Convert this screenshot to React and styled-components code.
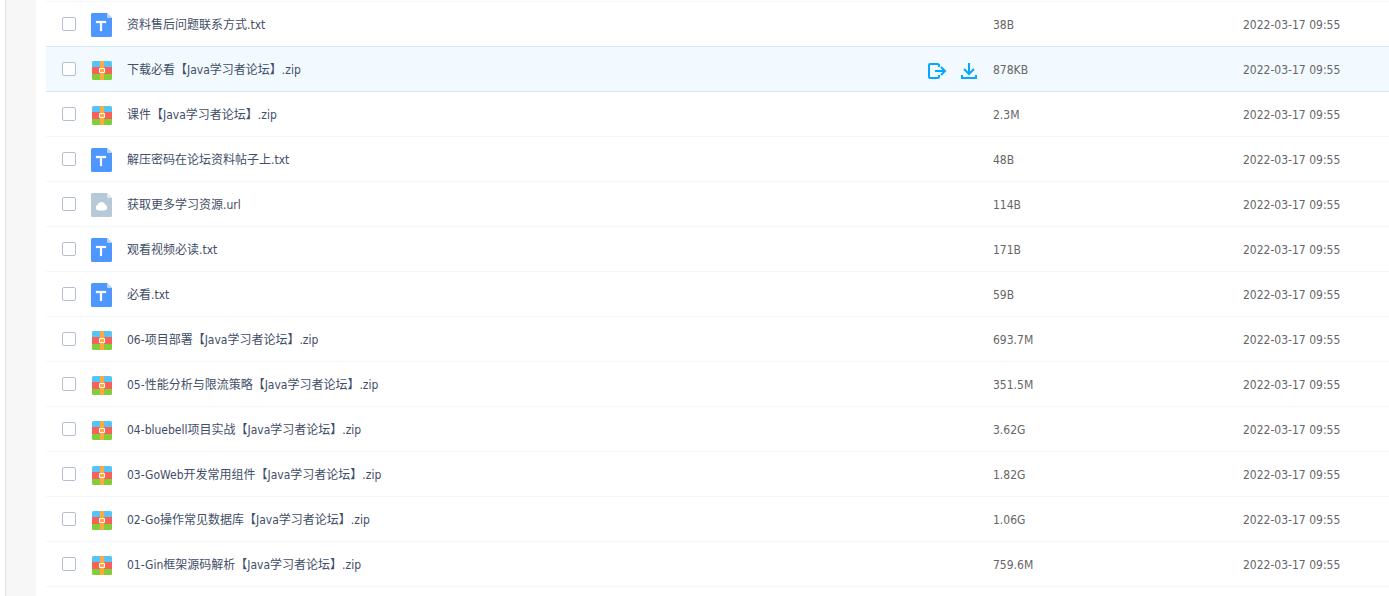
import React, { useState } from 'react';
import styled, { createGlobalStyle } from 'styled-components';

const GlobalStyle = createGlobalStyle`
	* {
		box-sizing: border-box;
	}

	body {
		margin: 0;
		background: #fff;
		color: #666;
		font-family: 'DejaVu Sans Condensed', 'Noto Sans CJK SC', sans-serif;
		font-size: 12px;
		line-height: 18px;
	}
`;

const Page = styled.div`
	display: flex;
	min-height: 100vh;
	padding-left: 5px;
`;

const Gutter = styled.aside`
	flex: none;
	width: 31px;
	background: #f7f7f7;
	border-left: 1px solid #e2e2e2;
`;

const Main = styled.main`
	flex: 1;
	min-width: 0;
	padding: 1px 0 0 10px;
`;

const Table = styled.table`
	width: 100%;
	table-layout: fixed;
	border-spacing: 0;
	border-bottom: 1px solid #f2f6fd;
`;

const Col = styled.col`
	width: ${props => props.$width}px;
`;

const Cell = styled.td`
	height: 45px;
	padding: 2px 0 0;
	border-top: 1px solid #f2f6fd;
	white-space: nowrap;
`;

const Row = styled.tr`
	&[data-active='true'] ${Cell} {
		background: #f2faff;
	}

	&[data-active='true'] ${Cell}, &[data-active='true'] + & ${Cell} {
		border-top-color: #d4e8fb;
	}
`;

const NameBox = styled.div`
	display: flex;
	align-items: center;
	padding: 0 13px 0 16px;
`;

const Checkbox = styled.input`
	appearance: none;
	flex: none;
	width: 14px;
	height: 14px;
	margin: 0 15px 2px 0;
	border: 1px solid #b4c0d2;
	border-radius: 2px;
	background: #fff;

	&:checked {
		background: #06a7ff;
		border-color: #06a7ff;
	}
`;

const FileIcon = styled.svg`
	flex: none;
	width: 22px;
	height: 24px;
	margin-right: 14px;
`;

const FileLink = styled.a`
	flex: 1;
	color: #424e67;
	text-decoration: none;
	overflow: hidden;
	text-overflow: ellipsis;
`;

const Actions = styled.div`
	display: flex;
	gap: 13px;
	padding-top: 4px;
`;

const ActionButton = styled.button`
	width: 20px;
	height: 20px;
	padding: 0;
	border: 0;
	background: none;
	color: #06a7ff;
	cursor: pointer;

	svg {
		display: block;
	}
`;

const TextIcon = () => (
	<FileIcon viewBox="0 0 22 24" aria-hidden="true">
		<path d="M1.5 0H16l5 5v17.5a1.5 1.5 0 0 1-1.5 1.5h-18A1.5 1.5 0 0 1 0 22.5v-21A1.5 1.5 0 0 1 1.5 0Z" fill="#4d97ff" />
		<path d="M16 0l5 5h-4a1 1 0 0 1-1-1Z" fill="#b8d5ff" />
		<path d="M5 8h10v2h-4v8H9v-8H5Z" fill="#fff" stroke="#fff" strokeWidth=".2" />
	</FileIcon>
);

const UrlIcon = () => (
	<FileIcon viewBox="0 0 22 24" aria-hidden="true">
		<path d="M1.5 0H16l5 5v17.5a1.5 1.5 0 0 1-1.5 1.5h-18A1.5 1.5 0 0 1 0 22.5v-21A1.5 1.5 0 0 1 1.5 0Z" fill="#b7c8d6" />
		<path d="M16 0l5 5h-4a1 1 0 0 1-1-1Z" fill="#e2e9ef" />
		<path d="M7.5 17.5a3 3 0 0 1-.8-5.800a4 4 0 0 1 7.600 0a3 3 0 0 1-.8 5.800Z" fill="#fff" />
	</FileIcon>
);

const ZipIcon = () => (
	<FileIcon viewBox="0 0 22 24" aria-hidden="true">
		<path d="M1 9V4.5A1.5 1.5 0 0 1 2.5 3h17A1.5 1.5 0 0 1 21 4.5V9Z" fill="#55c5f7" />
		<path d="M1 9h20v7H1Z" fill="#fb6058" />
		<path d="M1 16h20v4.5a1.5 1.5 0 0 1-1.5 1.5h-17A1.5 1.5 0 0 1 1 20.5Z" fill="#82cd3a" />
		<path d="M9 3h4v19H9Z" fill="#ffaa3e" />
		<path d="M8.5 10.5h5v4h-5Z" fill="#ffaa3e" stroke="#fff" />
	</FileIcon>
);

const ShareIcon = () => (
	<svg width="20" height="20" viewBox="0 0 20 20" fill="none" stroke="currentColor" strokeWidth="2" aria-hidden="true">
		<path d="M12 5V3.5A1.5 1.5 0 0 0 10.5 2H3a1 1 0 0 0-1 1v12a1 1 0 0 0 1 1h7.500a1.500 1.500 0 0 0 1.500-1.500V13" />
		<path d="M8 9h10M14 5l4 4-4 4" />
	</svg>
);

const DownloadIcon = () => (
	<svg width="20" height="20" viewBox="0 0 20 20" fill="none" stroke="currentColor" strokeWidth="2" aria-hidden="true">
		<path d="M9 1v11M4 7l5 5 5-5" />
		<path d="M2 13v3h14v-3" />
	</svg>
);

const icons = { txt: TextIcon, url: UrlIcon, zip: ZipIcon };

const files = [
	{ name: '资料售后问题联系方式.txt', size: '38B' },
	{ name: '下载必看【Java学习者论坛】.zip', size: '878KB' },
	{ name: '课件【Java学习者论坛】.zip', size: '2.3M' },
	{ name: '解压密码在论坛资料帖子上.txt', size: '48B' },
	{ name: '获取更多学习资源.url', size: '114B' },
	{ name: '观看视频必读.txt', size: '171B' },
	{ name: '必看.txt', size: '59B' },
	{ name: '06-项目部署【Java学习者论坛】.zip', size: '693.7M' },
	{ name: '05-性能分析与限流策略【Java学习者论坛】.zip', size: '351.5M' },
	{ name: '04-bluebell项目实战【Java学习者论坛】.zip', size: '3.62G' },
	{ name: '03-GoWeb开发常用组件【Java学习者论坛】.zip', size: '1.82G' },
	{ name: '02-Go操作常见数据库【Java学习者论坛】.zip', size: '1.06G' },
	{ name: '01-Gin框架源码解析【Java学习者论坛】.zip', size: '759.6M' }
];

const FileRow = ({ file, active, onHover }) => {
	const Icon = icons[file.name.split('.').pop()];

	return (
		<Row data-active={active} onMouseEnter={onHover}>
			<Cell>
				<NameBox>
					<Checkbox type="checkbox" aria-label={file.name} />
					<Icon />
					<FileLink href="#">{file.name}</FileLink>
					{active && (
						<Actions>
							<ActionButton type="button" aria-label="分享">
								<ShareIcon />
							</ActionButton>
							<ActionButton type="button" aria-label="下载">
								<DownloadIcon />
							</ActionButton>
						</Actions>
					)}
				</NameBox>
			</Cell>
			<Cell>{file.size}</Cell>
			<Cell>2022-03-17 09:55</Cell>
		</Row>
	);
};

const App = () => {
	const [active, setActive] = useState(1);

	return (
		<Page>
			<GlobalStyle />
			<Gutter />
			<Main>
				<Table>
					<colgroup>
						<col />
						<Col $width={250} />
						<Col $width={146} />
					</colgroup>
					<tbody>
						{files.map((file, index) => (
							<FileRow
								key={file.name}
								file={file}
								active={index === active}
								onHover={() => setActive(index)}
							/>
						))}
					</tbody>
				</Table>
			</Main>
		</Page>
	);
};

export default App;
